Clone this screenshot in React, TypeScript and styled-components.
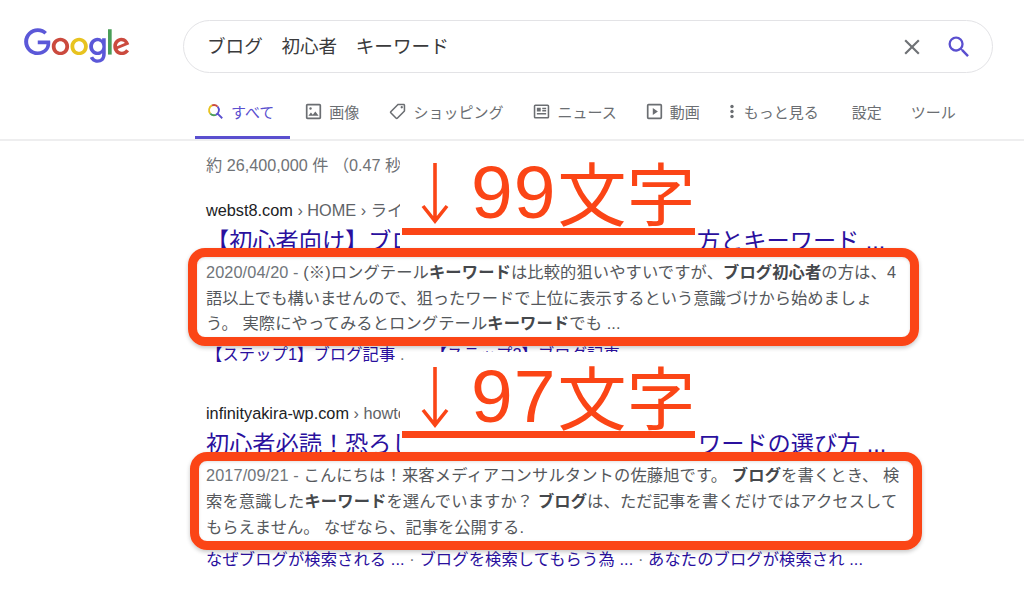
import React from "react";
import styled, { createGlobalStyle } from "styled-components";

const Global = createGlobalStyle`
  html, body { margin: 0; padding: 0; background: #fff; }
  body { font-family: "Liberation Sans", "Noto Sans CJK JP", sans-serif; }
`;

const Page = styled.div`
  position: relative;
  width: 1024px;
  height: 601px;
  overflow: hidden;
  background: #fff;
`;

const Header = styled.header`
  display: flex;
  align-items: center;
  padding: 20px 31px 0 24px;
  gap: 53px;
`;

const Logo = styled.svg`
  width: 106px;
  height: 36px;
  flex: none;
  margin-top: -1px;
`;

const SearchBox = styled.div`
  flex: 1;
  height: 53px;
  box-sizing: border-box;
  border: 1px solid #e3e3e6;
  border-radius: 27px;
  display: flex;
  align-items: center;
  padding: 0 19px 0 23px;
`;

const Query = styled.div`
  flex: 1;
  font-size: 18.6px;
  color: #3a3a3c;
  white-space: pre;
  margin-top: -5px;
`;

const SearchIcons = styled.div`
  display: flex;
  align-items: center;
  gap: 20px;
`;

const TabBar = styled.nav`
  display: flex;
  align-items: center;
  height: 66px;
  padding: 0 0 0 207px;
  border-bottom: 2px solid #eeeeef;
  box-sizing: border-box;
  margin-top: 2px;
`;

const Tab = styled.div<{ $active?: boolean; $gap?: number }>`
  position: relative;
  display: flex;
  align-items: center;
  gap: 7px;
  height: 100%;
  margin-left: ${(p) => p.$gap ?? 0}px;
  font-size: 15px;
  color: ${(p) => (p.$active ? "#5a4fcf" : "#6b6e72")};
  white-space: nowrap;
  padding-top: 8px;
  box-sizing: border-box;
  ${(p) =>
    p.$active
      ? `&::after {
          content: "";
          position: absolute;
          left: -12px;
          right: -16px;
          bottom: 0;
          height: 3px;
          background: #5a4fcf;
        }`
      : ""}
`;

const TabIcon = styled.svg`
  width: 17px;
  height: 17px;
  flex: none;
  fill: #6b6e72;
`;

const MoreDots = styled.svg`
  width: 8px;
  height: 17px;
  flex: none;
  fill: #6b6e72;
  margin-right: 8px;
`;

const Results = styled.main`
  padding-left: 206px;
`;

const Count = styled.div`
  font-size: 16.2px;
  line-height: 24px;
  height: 24px;
  margin-top: 12px;
  color: #6f7276;
  white-space: pre;
`;

const Result = styled.article<{ $top: number }>`
  margin-top: ${(p) => p.$top}px;
`;

const Crumb = styled.div`
  font-size: 16.3px;
  line-height: 24px;
  color: #202124;
  white-space: pre;
  span {
    color: #5f6368;
  }
`;

const Title = styled.h3`
  margin: 0;
  font-size: 23.2px;
  font-weight: 400;
  line-height: 38px;
  height: 38px;
  color: #2a109e;
  white-space: pre;
  display: flex;
`;

const TitleTail = styled.span<{ $at: number }>`
  position: absolute;
  left: ${(p) => p.$at}px;
`;

const SnippetLine = styled.div<{ $spacing?: number }>`
  font-size: 16.3px;
  line-height: 25.7px;
  color: #55585c;
  white-space: pre;
  letter-spacing: ${(p) => p.$spacing ?? 0}px;
  b {
    color: #45484c;
    font-weight: 700;
  }
  time {
    color: #70757a;
  }
`;

const Links = styled.div<{ $top: number }>`
  margin-top: ${(p) => p.$top}px;
  font-size: 16.3px;
  letter-spacing: 0.1px;
  line-height: 26px;
  height: 26px;
  color: #2a109e;
  white-space: pre;
`;

const LinkSeparator = styled.span<{ $wide?: boolean }>`
  color: #70757a;
  margin-right: ${(p) => (p.$wide ? 13 : 0)}px;
`;

const Cover = styled.div<{ $top: number; $height: number }>`
  position: absolute;
  left: 400px;
  width: 297px;
  top: ${(p) => p.$top}px;
  height: ${(p) => p.$height}px;
  background: #fff;
`;

const Patch = styled.div`
  position: absolute;
  left: 432px;
  top: 352px;
  width: 190px;
  height: 10px;
  background: #fff;
`;

const Bar = styled.div<{ $top: number }>`
  position: absolute;
  left: 402px;
  width: 293px;
  height: 7px;
  top: ${(p) => p.$top}px;
  background: #fb4516;
`;

const Arrow = styled.svg<{ $top: number }>`
  position: absolute;
  left: 420px;
  top: ${(p) => p.$top}px;
  width: 30px;
  height: 62px;
  fill: none;
  stroke: #fb4516;
  stroke-width: 3.6;
`;

const CharCount = styled.div<{ $top: number }>`
  position: absolute;
  left: 471px;
  top: ${(p) => p.$top}px;
  height: 88px;
  line-height: 88px;
  font-size: 75px;
  letter-spacing: 1px;
  color: #fb4516;
  white-space: pre;
  font-family: "Liberation Sans", sans-serif;
  span {
    position: relative;
    top: 3px;
    letter-spacing: 0;
    font-family: "Noto Sans CJK JP", sans-serif;
    font-size: 69px;
    margin-left: 1px;
  }
`;

const Frame = styled.div<{ $l: number; $t: number; $w: number; $h: number }>`
  position: absolute;
  left: ${(p) => p.$l}px;
  top: ${(p) => p.$t}px;
  width: ${(p) => p.$w}px;
  height: ${(p) => p.$h}px;
  box-sizing: border-box;
  border: 9px solid #fb4516;
  border-radius: 17px;
  box-shadow: 0 2px 4px rgba(0, 0, 0, 0.22), inset 0 1px 3px rgba(0, 0, 0, 0.12);
`;

const LogoMark = () => (
  <Logo viewBox="0 0 272 92" aria-label="Google">
    <path fill="#5b58d8" d="M35.29 41.41V32H67c.31 1.64.47 3.58.47 5.68 0 7.06-1.93 15.79-8.15 22.01-6.05 6.3-13.78 9.66-24.02 9.66C16.32 69.35.36 53.89.36 34.91.36 15.93 16.32.47 35.3.47c10.5 0 17.98 4.12 23.6 9.49l-6.64 6.64c-4.03-3.78-9.49-6.72-16.97-6.72-13.86 0-24.7 11.17-24.7 25.03 0 13.86 10.84 25.03 24.7 25.03 8.99 0 14.11-3.61 17.39-6.89 2.66-2.66 4.41-6.46 5.1-11.65l-22.49.01z" />
    <path fill="#cb4a3e" d="M115.75 47.18c0 12.77-9.99 22.18-22.25 22.18s-22.25-9.41-22.25-22.18C71.25 34.32 81.24 25 93.5 25s22.25 9.32 22.25 22.18zm-9.74 0c0-7.98-5.79-13.44-12.51-13.44S80.99 39.2 80.99 47.18c0 7.9 5.79 13.44 12.51 13.44s12.51-5.55 12.51-13.44z" />
    <path fill="#e8c320" d="M163.75 47.18c0 12.77-9.99 22.18-22.25 22.18s-22.25-9.41-22.25-22.18c0-12.85 9.99-22.18 22.25-22.18s22.25 9.32 22.25 22.18zm-9.74 0c0-7.98-5.79-13.44-12.51-13.44s-12.51 5.46-12.51 13.44c0 7.9 5.79 13.44 12.51 13.44s12.51-5.55 12.51-13.44z" />
    <path fill="#5b58d8" d="M209.75 26.34v39.82c0 16.38-9.66 23.07-21.08 23.07-10.75 0-17.22-7.19-19.66-13.07l8.48-3.53c1.51 3.61 5.21 7.87 11.17 7.87 7.31 0 11.84-4.51 11.84-13v-3.19h-.34c-2.18 2.69-6.38 5.04-11.68 5.04-11.09 0-21.25-9.66-21.25-22.09 0-12.52 10.16-22.26 21.25-22.26 5.29 0 9.49 2.35 11.68 4.96h.34v-3.61h9.25zm-8.56 20.92c0-7.81-5.21-13.52-11.84-13.52-6.72 0-12.35 5.71-12.35 13.52 0 7.73 5.63 13.36 12.35 13.36 6.63 0 11.84-5.63 11.84-13.36z" />
    <path fill="#4a9e58" d="M225 3v65h-9.5V3h9.5z" />
    <path fill="#cb4a3e" d="M262.02 54.48l7.56 5.04c-2.44 3.61-8.32 9.83-18.48 9.83-12.6 0-22.01-9.74-22.01-22.18 0-13.19 9.49-22.18 20.92-22.18 11.51 0 17.14 9.16 18.98 14.11l1.01 2.52-29.65 12.28c2.27 4.45 5.8 6.72 10.75 6.72 4.96 0 8.4-2.44 10.92-6.14zm-23.27-7.98l19.82-8.23c-1.09-2.77-4.37-4.7-8.23-4.7-4.95 0-11.84 4.37-11.59 12.93z" />
  </Logo>
);

const App = () => (
  <Page>
    <Global />
    <Header>
      <LogoMark />
      <SearchBox>
        <Query>ブログ　初心者　キーワード</Query>
        <SearchIcons>
          <svg width="26" height="26" viewBox="0 0 24 24" fill="#6f7276">
            <path d="M19 6.41 17.59 5 12 10.59 6.41 5 5 6.41 10.59 12 5 17.59 6.41 19 12 13.41 17.59 19 19 17.59 13.41 12z" />
          </svg>
          <svg width="28" height="28" viewBox="0 0 24 24" fill="#5a4fcf">
            <path d="M15.5 14h-.79l-.28-.27A6.47 6.47 0 0 0 16 9.5 6.5 6.5 0 1 0 9.5 16c1.61 0 3.09-.59 4.23-1.57l.27.28v.79l5 4.99L20.49 19l-4.99-5zm-6 0C7.01 14 5 11.99 5 9.5S7.01 5 9.5 5 14 7.01 14 9.5 11.99 14 9.5 14z" />
          </svg>
        </SearchIcons>
      </SearchBox>
    </Header>

    <TabBar>
      <Tab $active>
        <svg width="17" height="17" viewBox="0 0 24 24" fill="none" strokeWidth="2.6">
          <path d="M15 5a7.6 7.6 0 0 0-8-1.6" stroke="#cb4a3e" />
          <path d="M7 3.4A7.6 7.6 0 0 0 4.6 15" stroke="#e8c320" />
          <path d="M4.6 15a7.6 7.6 0 0 0 8 1.8" stroke="#4a9e58" />
          <path d="M12.6 16.8A7.6 7.6 0 0 0 15 5M14.6 14.6 21.5 21.5" stroke="#5a4fcf" />
        </svg>
        すべて
      </Tab>
      <Tab $gap={31}>
        <TabIcon viewBox="2 2 20 20">
          <path d="M19 5v14H5V5h14m0-2H5c-1.1 0-2 .9-2 2v14c0 1.1.9 2 2 2h14c1.1 0 2-.9 2-2V5c0-1.1-.9-2-2-2zm-4.86 8.86-3 3.87L9 13.14 6 17h12l-3.86-5.14z" />
          <circle cx="8.5" cy="8.5" r="1.4" />
        </TabIcon>
        画像
      </Tab>
      <Tab $gap={30}>
        <TabIcon viewBox="1 1 22 22">
          <path d="M21.41 11.58l-9-9C12.05 2.22 11.55 2 11 2H4c-1.1 0-2 .9-2 2v7c0 .55.22 1.05.59 1.42l9 9c.36.36.86.58 1.41.58s1.05-.22 1.41-.59l7-7c.37-.36.59-.86.59-1.41s-.23-1.06-.59-1.42zM13 20.01 4 11V4h7v-.01l9 9-7 7.02z" transform="matrix(-1 0 0 1 24 0)" />
          <circle cx="17.5" cy="6.5" r="1.5" />
        </TabIcon>
        ショッピング
      </Tab>
      <Tab $gap={30}>
        <TabIcon viewBox="1 1 22 22">
          <path d="M4 3h16a2 2 0 0 1 2 2v14a2 2 0 0 1-2 2H4a2 2 0 0 1-2-2V5a2 2 0 0 1 2-2zm0 2v14h16V5H4zm2 2h5v5H6V7zm7 0h5v2h-5V7zm0 3h5v2h-5v-2zm-7 4h12v2H6v-2z" />
        </TabIcon>
        ニュース
      </Tab>
      <Tab $gap={29}>
        <TabIcon viewBox="2 2 20 20">
          <path d="M5 3h14a2 2 0 0 1 2 2v14a2 2 0 0 1-2 2H5a2 2 0 0 1-2-2V5a2 2 0 0 1 2-2zm0 2v14h14V5H5zm5 3 6 4-6 4V8z" />
        </TabIcon>
        動画
      </Tab>
      <Tab $gap={28}>
        <MoreDots viewBox="0 0 8 17">
          <circle cx="4" cy="3.5" r="1.7" />
          <circle cx="4" cy="8.5" r="1.7" />
          <circle cx="4" cy="13.5" r="1.7" />
        </MoreDots>
      </Tab>
      <Tab>もっと見る</Tab>
      <Tab $gap={33}>設定</Tab>
      <Tab $gap={29}>ツール</Tab>
    </TabBar>

    <Results>
      <Count>約 26,400,000 件 （0.47 秒</Count>
      <Result $top={21}>
        <Crumb>
          webst8.com<span> › HOME › ライ</span>
        </Crumb>
        <Title>
          【初心者向け】ブロ
          <TitleTail $at={697}>方とキーワード ...</TitleTail>
        </Title>
        <SnippetLine $spacing={0.1}>
          <time>2020/04/20 - </time>(※)ロングテール<b>キーワード</b>は比較的狙いやすいですが、<b>ブログ初心者</b>の方は、4
        </SnippetLine>
        <SnippetLine>語以上でも構いませんので、狙ったワードで上位に表示するという意識づけから始めましょ</SnippetLine>
        <SnippetLine $spacing={0.1}>
          う。 実際にやってみるとロングテール<b>キーワード</b>でも ...
        </SnippetLine>
        <Links $top={4}>
          【ステップ1】ブログ記事<LinkSeparator $wide> . </LinkSeparator>　【ステップ2】ブログ記事
        </Links>
      </Result>
      <Result $top={34}>
        <Crumb>
          infinityakira-wp.com<span> › howto</span>
        </Crumb>
        <Title>
          初心者必読！恐ろし
          <TitleTail $at={698}>ワードの選び方 ...</TitleTail>
        </Title>
        <SnippetLine $spacing={0.12}>
          <time>2017/09/21 - </time>こんにちは！来客メディアコンサルタントの佐藤旭です。 <b>ブログ</b>を書くとき、 検
        </SnippetLine>
        <SnippetLine $spacing={0.12}>
          索を意識した<b>キーワード</b>を選んでいますか？ <b>ブログ</b>は、ただ記事を書くだけではアクセスして
        </SnippetLine>
        <SnippetLine>もらえません。 なぜなら、記事を公開する.</SnippetLine>
        <Links $top={6}>
          なぜブログが検索される ...<LinkSeparator> · </LinkSeparator>ブログを検索してもらう為 ...<LinkSeparator> · </LinkSeparator>あなたのブログが検索され ...
        </Links>
      </Result>
    </Results>

    <Cover $top={150} $height={99} />
    <Cover $top={362} $height={90} />
    <Patch />

    <Arrow $top={162} viewBox="0 0 30 62">
      <path d="M15 1v58M3 44l12 15 12-15" />
    </Arrow>
    <CharCount $top={144}>
      99<span>文字</span>
    </CharCount>
    <Bar $top={228} />
    <Frame $l={188} $t={248} $w={731} $h={98} />

    <Arrow $top={366} viewBox="0 0 30 62">
      <path d="M15 1v58M3 44l12 15 12-15" />
    </Arrow>
    <CharCount $top={348}>
      97<span>文字</span>
    </CharCount>
    <Bar $top={431} />
    <Frame $l={190} $t={452} $w={732} $h={98} />
  </Page>
);

export default App;
